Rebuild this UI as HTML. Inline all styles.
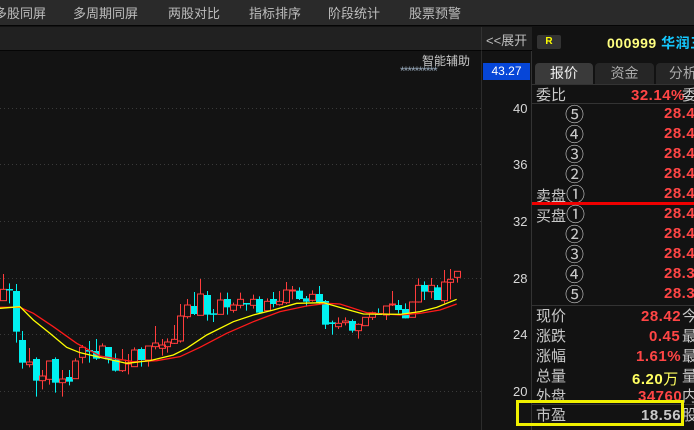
<!DOCTYPE html>
<html><head><meta charset="utf-8"><style>
*{margin:0;padding:0;box-sizing:border-box}
body{width:694px;height:430px;overflow:hidden;background:#131313;font-family:"Liberation Sans","Noto Sans CJK SC",sans-serif;position:relative;color:#c8c8c8}
.a{position:absolute;white-space:nowrap}
.tb{left:0;top:0;width:694px;height:26px;background:#2a2a2a;border-bottom:1px solid #050505}
.tb span{position:absolute;top:3px;font-size:13px;color:#bdbdbd}
.bar2{left:0;top:27px;width:481px;height:24px;background:#212121;border-bottom:1px solid #050505}
.ax{left:481px;top:27px;width:51px;height:403px;background:#131313;border-left:1px solid #2c2c2c;border-right:1px solid #333}
.rp{left:532px;top:27px;width:162px;height:403px;background:#121212}
.lbl{font-size:13px;color:#d8d8d8;font-family:"Liberation Sans",sans-serif}
.row{position:absolute;left:536px;font-size:15px;color:#c8c8c8;height:20px;line-height:20px}
.v{position:absolute;font-size:15px;font-weight:bold;color:#ff4545;font-family:"Liberation Sans",sans-serif;letter-spacing:0.5px}
.c{position:absolute;left:565px;font-size:19px;color:#c8c8c8;line-height:20px;font-family:"Noto Sans CJK SC",sans-serif}
.r{position:absolute;left:682px;font-size:15px;line-height:20px}
</style></head><body>
<div class="a tb">
<span style="left:-6px">多股同屏</span><span style="left:73px">多周期同屏</span><span style="left:168px">两股对比</span><span style="left:249px">指标排序</span><span style="left:328px">阶段统计</span><span style="left:409px">股票预警</span>
</div>
<div class="a bar2"></div>
<div class="a" style="left:481px;top:27px;width:51px;height:24px;background:#212121;border-bottom:1px solid #050505;border-left:1px solid #333"></div>
<div class="a" style="left:486px;top:30px;font-size:13px;color:#bdbdbd">&lt;&lt;展开</div>
<div class="a" style="left:422px;top:52px;font-size:12px;color:#c8c8c8">智能辅助</div>
<div class="a" style="left:400px;top:66px;font-size:12px;line-height:10px;color:#9ab;letter-spacing:-1px">**********</div>

<svg class="a" style="left:0;top:51px" width="481" height="379" id="ch"></svg>
<div class="a ax" style="top:51px;height:379px"></div>
<div class="a" style="left:483px;top:63px;width:47px;height:17px;background:#0646d8;color:#fff;font-size:12px;text-align:center;line-height:17px">43.27</div>
<div class="a lbl" style="left:513px;top:101px">40</div>
<div class="a lbl" style="left:513px;top:157px">36</div>
<div class="a lbl" style="left:513px;top:214px">32</div>
<div class="a lbl" style="left:513px;top:271px">28</div>
<div class="a lbl" style="left:513px;top:327px">24</div>
<div class="a lbl" style="left:513px;top:384px">20</div>

<div class="a rp"></div>
<div class="a" style="left:537px;top:35px;width:24px;height:14px;background:#333;border-radius:2px;color:#ff0;font-size:10px;font-weight:bold;text-align:center;line-height:14px">R</div>
<div class="a" style="left:607px;top:33px;font-size:14px;font-weight:bold;color:#ffff80;letter-spacing:0.5px">000999 <span style="color:#15c8ff">华润三九</span></div>
<div class="a" style="left:535px;top:63px;width:58px;height:21px;background:#3a3a3a;border-radius:4px 4px 0 0;color:#eee;font-size:14px;text-align:center;line-height:21px">报价</div>
<div class="a" style="left:595px;top:63px;width:59px;height:21px;background:#262626;border-radius:4px 4px 0 0;color:#aaa;font-size:14px;text-align:center;line-height:21px">资金</div>
<div class="a" style="left:656px;top:63px;width:50px;height:21px;background:#262626;border-radius:4px 4px 0 0;color:#aaa;font-size:14px;text-align:center;line-height:21px">&nbsp;分析</div>
<div class="a" style="left:532px;top:84px;width:162px;height:1px;background:#333"></div>
<div class="row" style="top:86px">委比</div>
<div class="v" style="left:631px;top:87px">32.14%</div><div class="r" style="top:86px">委</div>
<div class="a" style="left:532px;top:103px;width:162px;height:1px;background:#333"></div>

<div class="c" style="top:104px">⑤</div><div class="v" style="left:664px;top:105px">28.47</div>
<div class="c" style="top:124px">④</div><div class="v" style="left:664px;top:125px">28.46</div>
<div class="c" style="top:144px">③</div><div class="v" style="left:664px;top:145px">28.45</div>
<div class="c" style="top:164px">②</div><div class="v" style="left:664px;top:165px">28.44</div>
<div class="row" style="top:184px">卖盘<span style="font-size:19px;font-family:'Noto Sans CJK SC',sans-serif">①</span></div><div class="v" style="left:664px;top:185px">28.43</div>
<div class="a" style="left:532px;top:202px;width:162px;height:3px;background:#ee0000"></div>
<div class="row" style="top:204px">买盘<span style="font-size:19px;font-family:'Noto Sans CJK SC',sans-serif">①</span></div><div class="v" style="left:664px;top:205px">28.42</div>
<div class="c" style="top:224px">②</div><div class="v" style="left:664px;top:225px">28.41</div>
<div class="c" style="top:244px">③</div><div class="v" style="left:664px;top:245px">28.40</div>
<div class="c" style="top:264px">④</div><div class="v" style="left:664px;top:265px">28.39</div>
<div class="c" style="top:284px">⑤</div><div class="v" style="left:664px;top:285px">28.38</div>
<div class="a" style="left:532px;top:305px;width:162px;height:1px;background:#333"></div>

<div class="row" style="top:307px">现价</div><div class="v" style="left:641px;top:308px">28.42</div><div class="r" style="top:307px">今</div>
<div class="row" style="top:327px">涨跌</div><div class="v" style="left:649px;top:328px">0.45</div><div class="r" style="top:327px">最</div>
<div class="row" style="top:347px">涨幅</div><div class="v" style="left:636px;top:348px">1.61%</div><div class="r" style="top:347px">最</div>
<div class="row" style="top:367px">总量</div><div class="v" style="left:632px;top:368px;color:#ffff60">6.20<span style="font-weight:normal">万</span></div><div class="r" style="top:367px">量</div>
<div class="row" style="top:387px">外盘</div><div class="v" style="left:638px;top:388px">34760</div><div class="r" style="top:387px">内</div>
<div class="a" style="left:532px;top:404px;width:162px;height:1px;background:#333"></div>
<div class="row" style="top:406px">市盈</div><div class="v" style="left:641px;top:407px;color:#c8c8c8">18.56</div><div class="r" style="top:406px">股</div>
<div class="a" style="left:516px;top:400px;width:168px;height:26px;border:3px solid #f0f000"></div>

<script>
var s=document.getElementById('ch'),h='';
[108,164,221,278,334,391].forEach(function(y){h+='<line x1="0" x2="481" y1="'+(y-51+0.5)+'" y2="'+(y-51+0.5)+'" stroke="#3a3a3a" stroke-dasharray="1,3"/>';});
var c=[[3,88,122,42,122,'r'],[9,87,89,70,130,'c'],[16,93,215,72,248,'c'],[22,240,308,213,326,'c'],[29,306,314,264,322,'r'],[36,297,362,292,410,'c'],[42,348,362,330,388,'r'],[49,303,358,303,374,'r'],[55,297,368,292,398,'c'],[62,357,368,330,410,'r'],[69,351,365,330,376,'c'],[75,303,356,295,356,'r'],[82,262,292,255,310,'r'],[89,270,275,243,308,'c'],[96,273,296,237,300,'c'],[102,258,290,250,290,'r'],[108,261,298,261,310,'c'],[115,299,332,280,335,'c'],[122,300,332,267,336,'r'],[128,308,312,282,343,'r'],[134,270,320,262,320,'r'],[141,267,300,262,320,'c'],[148,258,300,258,320,'r'],[155,249,260,198,268,'r'],[162,255,265,237,287,'r'],[167,246,260,235,278,'r'],[174,238,250,195,252,'r'],[180,168,243,132,248,'r'],[187,135,170,117,176,'r'],[194,138,162,96,165,'c'],[200,102,166,57,166,'r'],[207,105,164,93,182,'c'],[213,160,164,147,186,'c'],[220,120,163,98,163,'r'],[227,117,142,98,164,'c'],[233,135,151,128,158,'r'],[240,118,136,98,145,'r'],[246,129,133,129,152,'c'],[253,118,136,104,146,'r'],[259,117,158,109,160,'c'],[267,124,152,115,155,'r'],[273,117,132,96,142,'c'],[279,124,134,93,137,'r'],[286,90,128,66,132,'r'],[292,90,92,78,118,'r'],[299,92,117,82,120,'c'],[306,115,125,108,140,'c'],[312,103,121,91,125,'r'],[319,102,128,78,132,'c'],[325,123,194,120,207,'c'],[332,187,192,182,224,'c'],[338,190,200,172,207,'r'],[345,183,188,172,196,'r'],[352,183,212,178,218,'c'],[358,193,212,190,236,'r'],[365,172,197,172,197,'r'],[372,158,172,155,180,'r'],[378,160,165,145,165,'c'],[386,138,165,138,180,'r'],[392,132,134,93,138,'r'],[398,135,150,120,160,'c'],[405,147,175,130,175,'c'],[412,126,172,124,172,'r'],[418,76,126,55,128,'r'],[424,75,95,64,120,'c'],[431,76,95,54,115,'r'],[437,82,120,75,120,'c'],[444,66,122,30,130,'r'],[450,58,67,27,118,'r'],[457,34,52,34,68,'r']];
function Y(v){return 260+v/3-51;}
c.forEach(function(k){var x=k[0],t=Y(k[1]),b=Y(k[2]),hi=Y(k[3]),lo=Y(k[4]);
if(k[5]=='r'){h+='<line x1="'+(x+0.5)+'" x2="'+(x+0.5)+'" y1="'+hi+'" y2="'+t+'" stroke="#ff3c3c"/><line x1="'+(x+0.5)+'" x2="'+(x+0.5)+'" y1="'+b+'" y2="'+lo+'" stroke="#ff3c3c"/><rect x="'+(x-2.5)+'" y="'+t+'" width="6" height="'+Math.max(b-t,1)+'" fill="none" stroke="#ff3c3c"/>';}
else{h+='<line x1="'+(x+0.5)+'" x2="'+(x+0.5)+'" y1="'+hi+'" y2="'+lo+'" stroke="#00f0f0"/><rect x="'+(x-3)+'" y="'+t+'" width="7" height="'+Math.max(b-t,1.5)+'" fill="#00f0f0"/>';}});
function P(a){return a.map(function(p){return (p[0]/3)+','+Y(p[1]);}).join(' ');}
h+='<polyline fill="none" stroke="#ff1a1a" stroke-width="1.3" points="'+P([[0,142],[60,142],[100,160],[160,200],[230,250],[300,288],[400,305],[470,302],[540,290],[600,262],[680,220],[760,185],[840,155],[920,138],[980,130],[1020,132],[1100,158],[1200,165],[1260,160],[1320,150],[1370,132]])+'"/>';
h+='<polyline fill="none" stroke="#ffff00" stroke-width="1.3" points="'+P([[0,145],[60,140],[100,180],[150,220],[200,262],[240,278],[300,292],[380,310],[450,302],[520,285],[560,265],[620,225],[700,185],[760,165],[820,150],[890,130],[970,128],[1040,148],[1090,162],[1200,163],[1260,155],[1310,142],[1370,118]])+'"/>';
s.innerHTML=h;
</script>
</body></html>
